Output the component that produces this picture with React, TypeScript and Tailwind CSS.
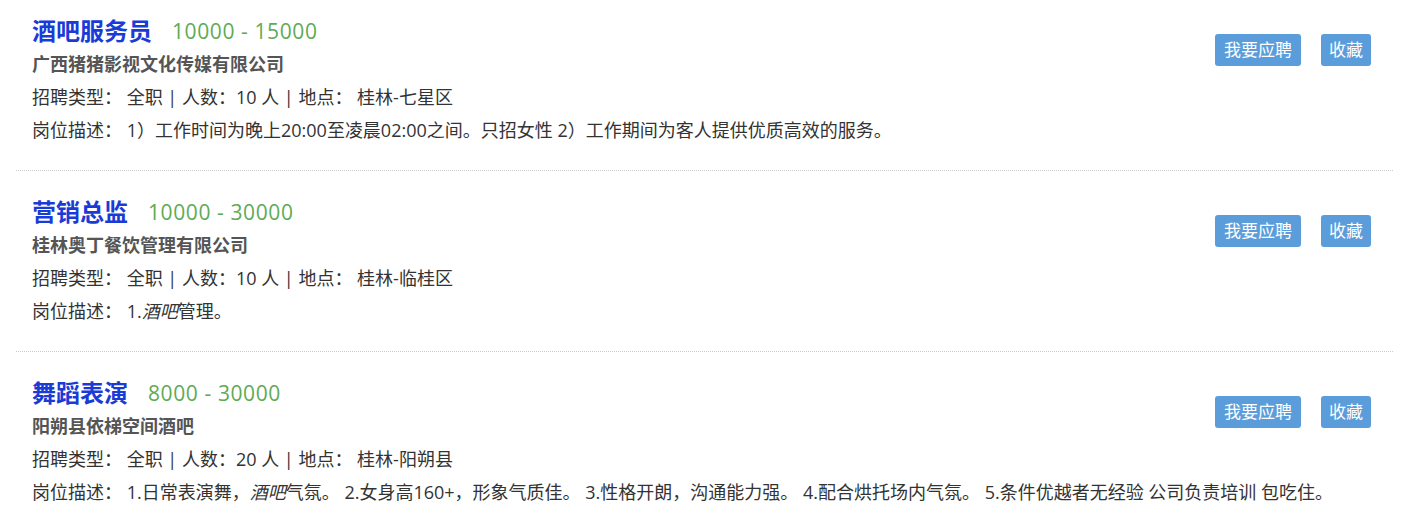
import React from "react";

type Job = {
  title: string;
  salary: string;
  company: string;
  count: string;
  place: string;
  desc: React.ReactNode;
};

const jobs: Job[] = [
  {
    title: "酒吧服务员",
    salary: "10000 - 15000",
    company: "广西猪猪影视文化传媒有限公司",
    count: "10",
    place: "桂林-七星区",
    desc: "1）工作时间为晚上20:00至凌晨02:00之间。只招女性 2）工作期间为客人提供优质高效的服务。",
  },
  {
    title: "营销总监",
    salary: "10000 - 30000",
    company: "桂林奥丁餐饮管理有限公司",
    count: "10",
    place: "桂林-临桂区",
    desc: (
      <>
        1.<i>酒吧</i>管理。
      </>
    ),
  },
  {
    title: "舞蹈表演",
    salary: "8000 - 30000",
    company: "阳朔县依梯空间酒吧",
    count: "20",
    place: "桂林-阳朔县",
    desc: (
      <>
        1.日常表演舞，<i>酒吧</i>气氛。 2.女身高160+，形象气质佳。 3.性格开朗，沟通能力强。 4.配合烘托场内气氛。 5.条件优越者无经验 公司负责培训 包吃住。
      </>
    ),
  },
];

export default function App() {
  return (
    <div
      className="bg-white w-[1406px] h-[522px] overflow-hidden"
      style={{ fontFamily: '"Open Sans", "Noto Sans CJK SC", sans-serif' }}
    >
      <div className="ml-4 mr-[13px]">
        {jobs.map((j, i) => (
          <div
            key={i}
            className={`flex justify-between pl-4 pr-[22px] pb-[23px] border-b border-dotted border-[#cccccc] ${
              i === 0 ? "pt-[13px]" : "pt-[23px]"
            }`}
          >
            <div className="flex flex-col min-w-0">
              <div className="flex items-center h-[35px]">
                <span className="text-[24px] font-bold text-[#1b3bd6] leading-[34px]">{j.title}</span>
                <span className="ml-5 text-[21px] tracking-[0.6px] text-[#5eaa55] leading-[34px]">{j.salary}</span>
              </div>
              <div className="h-[33px] flex items-center text-[18px] font-bold text-[#555555]">
                {j.company}
              </div>
              <div className="h-[33px] flex items-center text-[18px] text-[#333333] whitespace-pre">
                {"招聘类型： 全职 | 人数：" + j.count + " 人 | 地点： " + j.place}
              </div>
              <div className="h-[33px] flex items-center text-[18px] text-[#333333] whitespace-pre">
                <span>岗位描述： </span>
                <span>{j.desc}</span>
              </div>
            </div>
            <div className="flex shrink-0 gap-5 mt-[21px] items-start whitespace-nowrap">
              <button className="h-[32px] px-[9px] rounded-[3px] bg-[#5b9ddb] text-white text-[17px] leading-[32px]">
                我要应聘
              </button>
              <button className="h-[32px] px-[8px] rounded-[3px] bg-[#5b9ddb] text-white text-[17px] leading-[32px]">
                收藏
              </button>
            </div>
          </div>
        ))}
      </div>
    </div>
  );
}
